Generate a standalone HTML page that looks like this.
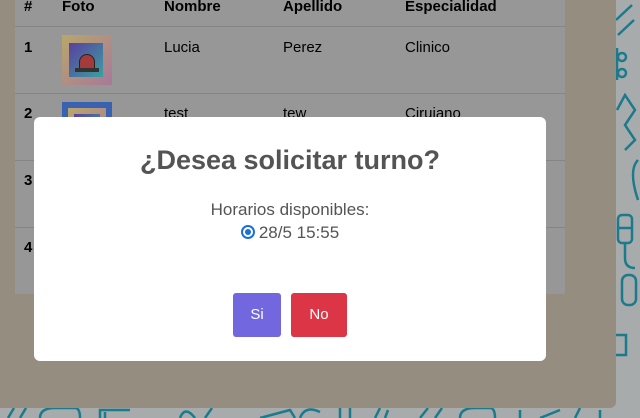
<!DOCTYPE html>
<html><head><meta charset="utf-8"><style>
*{margin:0;padding:0;box-sizing:border-box}
body{width:640px;height:418px;overflow:hidden;position:relative;background:#a8abac;font-family:"Liberation Sans",sans-serif}
.bg{position:absolute;left:0;top:0;width:640px;height:418px}
.over{position:absolute;left:0;top:0;width:616px;height:408px;background:#958d80;border-radius:0 0 6px 0}
.table{position:absolute;left:15px;top:0;width:550px;height:294px;background:#979797}
.cell{position:absolute;font-size:15px;color:#000}
.h{font-weight:bold}
.line{position:absolute;left:0;width:550px;height:1px;background:#858585}
.img{position:absolute;left:47px;width:50px;height:50px}
.modal{position:absolute;left:34px;top:117px;width:512px;height:244px;background:#fff;border-radius:6px}
.title{position:absolute;left:0;width:512px;top:28px;text-align:center;font-size:27px;font-weight:bold;color:#545454}
.sub{position:absolute;left:0;width:512px;top:81px;text-align:center;font-size:17px;color:#545454;line-height:23px}
.btn{position:absolute;top:176px;height:44px;color:#fff;font-size:15px;text-align:center;line-height:44px;border-radius:3px}
</style></head><body>
<svg class="bg" viewBox="0 0 640 418" fill="none" stroke="#1b7a8c" stroke-width="2.5">
<path d="M616 20 L632 5 M618 35 L634 20"/>
<circle cx="622" cy="57" r="4"/><circle cx="622" cy="73" r="4"/>
<path d="M617 48 V80"/>
<path d="M617 110 L625 95 L635 110 L625 125 L635 140 L625 150"/>
<path d="M638 160 Q628 170 638 200"/>
<rect x="618" y="215" width="14" height="28" rx="4"/><path d="M618 228 H632 M625 243 V258 Q625 268 635 268"/>
<rect x="622" y="275" width="14" height="30" rx="6"/>
<path d="M616 335 H626 V355 H616"/>
<path d="M8 418 L14 408 M20 418 L26 408"/>
<path d="M40 418 Q40 408 55 408 H75 Q80 408 80 418"/>
<path d="M100 418 V410 H130 M105 418 V412"/>
<path d="M180 418 Q185 405 195 418 M205 418 L212 408"/>
<path d="M260 418 L290 410 L295 418"/>
<path d="M300 418 Q305 405 320 412 M340 418 V408 M350 418 V408"/>
<path d="M375 418 L380 408 M385 418 L388 410"/>
<path d="M420 418 L428 408 M435 418 L442 408"/>
<path d="M460 418 Q460 408 475 408 H490 Q495 408 495 418"/>
<path d="M520 418 V410 M540 418 L560 410 M575 418 L580 408 M600 418 V410"/>
</svg>
<div class="over"></div>
<div class="table">
 <div class="cell h" style="left:9px;top:-2px">#</div>
 <div class="cell h" style="left:47px;top:-2px">Foto</div>
 <div class="cell h" style="left:149px;top:-2px">Nombre</div>
 <div class="cell h" style="left:268px;top:-2px">Apellido</div>
 <div class="cell h" style="left:390px;top:-2px">Especialidad</div>
 <div class="line" style="top:26px"></div>
 <div class="cell h" style="left:9px;top:39px">1</div>
 <div class="img" style="top:35px;background:linear-gradient(135deg,#b8a76a,#a8789a)">
  <div style="position:absolute;left:7px;top:8px;width:34px;height:34px;background:linear-gradient(135deg,#5a3fa0,#3aa0a0)"></div>
  <div style="position:absolute;left:17px;top:19px;width:16px;height:15px;background:#a43a3a;border-radius:8px 8px 0 0;border:1px solid #222"></div>
  <div style="position:absolute;left:13px;top:33px;width:24px;height:4px;background:#333"></div>
 </div>
 <div class="cell" style="left:149px;top:39px">Lucia</div>
 <div class="cell" style="left:268px;top:39px">Perez</div>
 <div class="cell" style="left:390px;top:39px">Clinico</div>
 <div class="line" style="top:93px"></div>
 <div class="cell h" style="left:9px;top:105px">2</div>
 <div class="img" style="top:102px;background:#3a62b0">
  <div style="position:absolute;left:6px;top:6px;width:38px;height:38px;background:linear-gradient(135deg,#b8a76a,#a8789a)"></div>
  <div style="position:absolute;left:12px;top:12px;width:26px;height:26px;background:linear-gradient(135deg,#5a3fa0,#3aa0a0)"></div>
 </div>
 <div class="cell" style="left:149px;top:105px">test</div>
 <div class="cell" style="left:268px;top:105px">tew</div>
 <div class="cell" style="left:390px;top:105px">Ciruiano</div>
 <div class="line" style="top:160px"></div>
 <div class="cell h" style="left:9px;top:172px">3</div>
 <div class="line" style="top:227px"></div>
 <div class="cell h" style="left:9px;top:239px">4</div>
</div>
<div class="modal">
 <div class="title">¿Desea solicitar turno?</div>
 <div class="sub">Horarios disponibles:<br><span style="display:inline-block;width:14px;height:14px;border:2px solid #1a6fd8;border-radius:50%;vertical-align:-1px;position:relative;margin-right:4px"><span style="position:absolute;left:2px;top:2px;width:6px;height:6px;border-radius:50%;background:#1a6fd8"></span></span>28/5 15:55</div>
 <div class="btn" style="left:199px;width:48px;background:#7367e0">Si</div>
 <div class="btn" style="left:257px;width:56px;background:#dc3545">No</div>
</div>
</body></html>
